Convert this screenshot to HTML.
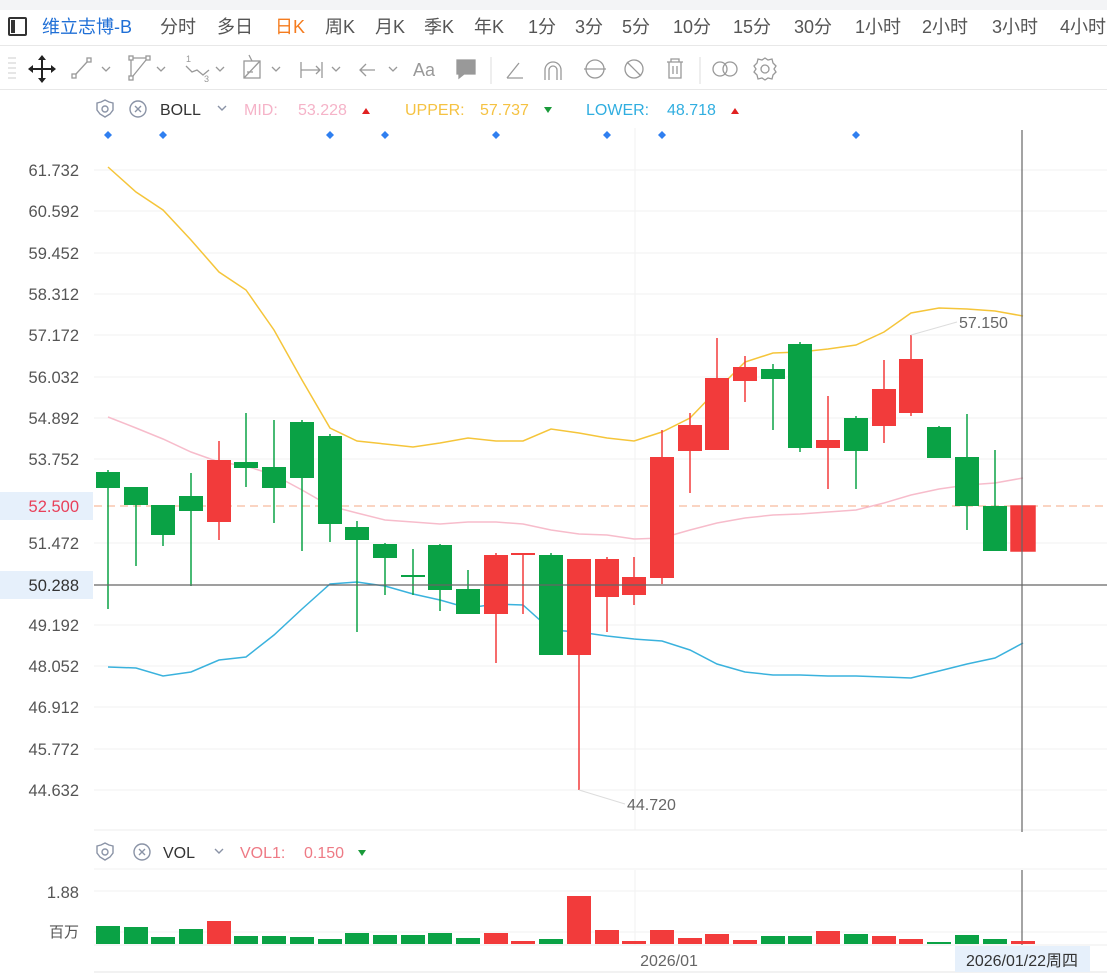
<!DOCTYPE html>
<html><head><meta charset="utf-8"><style>
*{margin:0;padding:0;box-sizing:border-box}
body{width:1107px;height:978px;background:#fff;font-family:"Liberation Sans","Noto Sans CJK SC",sans-serif;overflow:hidden;position:relative}
.top{position:absolute;left:0;top:0;width:1107px;height:10px;background:#f3f4f6}
.tabs{position:absolute;left:0;top:10px;width:1107px;height:36px;border-bottom:1px solid #e8e8e8;font-size:18px;color:#555;white-space:nowrap}
.tabs span{position:absolute;top:4px;line-height:26px}
.tools{position:absolute;left:0;top:47px;width:1107px;height:43px;border-bottom:1px solid #e8e8e8}
svg{position:absolute;left:0;top:0}
</style></head><body>
<div class="top"></div>
<div class="tabs">
<span style="left:8px;top:7px;width:19px;height:19px;border:2px solid #333;border-radius:2px"><i style="position:absolute;left:1px;top:1px;width:4px;height:13px;background:#333"></i></span>
<span style="left:42px;color:#1f6fd6">维立志博-B</span>
<span style="left:160px">分时</span><span style="left:217px">多日</span>
<span style="left:275px;color:#f57c1f">日K</span>
<span style="left:325px">周K</span><span style="left:375px">月K</span><span style="left:424px">季K</span><span style="left:474px">年K</span>
<span style="left:528px">1分</span><span style="left:575px">3分</span><span style="left:622px">5分</span>
<span style="left:673px">10分</span><span style="left:733px">15分</span><span style="left:794px">30分</span>
<span style="left:855px">1小时</span><span style="left:922px">2小时</span><span style="left:992px">3小时</span><span style="left:1060px">4小时</span>
</div>
<div class="tools"></div>
<svg width="1107" height="978" viewBox="0 0 1107 978" font-family="Liberation Sans, Noto Sans CJK SC, sans-serif">
<g stroke="#ddd" stroke-width="1.5"><line x1="8" y1="58" x2="16" y2="58"/><line x1="8" y1="63" x2="16" y2="63"/><line x1="8" y1="68" x2="16" y2="68"/><line x1="8" y1="73" x2="16" y2="73"/><line x1="8" y1="78" x2="16" y2="78"/></g>
<g stroke="#222" stroke-width="2" fill="none"><line x1="31" y1="69" x2="53" y2="69"/><line x1="42" y1="58" x2="42" y2="80"/></g>
<g fill="#222"><path d="M42 55l-4 5h8zM42 83l-4-5h8zM28 69l5-4v8zM56 69l-5-4v8z"/></g>
<g stroke="#999" stroke-width="1.3" fill="none">
<rect x="72" y="74" width="4" height="4"/><rect x="87" y="58" width="4" height="4"/><line x1="76" y1="74" x2="87" y2="62"/>
<path d="M102 67l4 4 4-4"/>
<rect x="129" y="56" width="4" height="4"/><rect x="146" y="56" width="4" height="4"/><rect x="129" y="76" width="4" height="4"/><path d="M131 60v16M133 58h13M146 60l-13 16"/>
<path d="M157 67l4 4 4-4"/>
<path d="M186 66l6 6 5-2 6 5 6-5"/><path d="M216 67l4 4 4-4"/>
<rect x="244" y="61" width="16" height="17"/><path d="M244 78l16-17M247 72h6M249 55l3 6"/><path d="M272 67l4 4 4-4"/>
<path d="M301 62v16M322 62v16M301 70h19M316 66l4 4-4 4"/><path d="M332 67l4 4 4-4"/>
<path d="M360 70h15M366 64l-6 6 6 6"/><path d="M389 67l4 4 4-4"/>
<path d="M457 60h18v14h-11l-5 4v-4h-2z" fill="#999" stroke="#999"/>
<line x1="491" y1="57" x2="491" y2="84" stroke="#e5e5e5"/>
<path d="M507 78h16M507 78l12-15"/>
<path d="M545 80v-10a8 8 0 0 1 16 0v10M549 80v-10a4 4 0 0 1 8 0v10"/>
<circle cx="595" cy="69" r="9"/><path d="M584 69h22"/>
<circle cx="634" cy="69" r="9"/><path d="M627 62l14 14"/>
<path d="M667 62h16M671 62v-3h8v3M669 62v16h12v-16M673 66v8M677 66v8"/>
<line x1="700" y1="57" x2="700" y2="84" stroke="#e5e5e5"/>
<circle cx="720" cy="69" r="7"/><circle cx="730" cy="69" r="7"/>
<circle cx="765" cy="69" r="4"/><path d="M765 58l3 2 4-1 1 4 3 3-2 3 2 3-3 3-1 4-4-1-3 2-3-2-4 1-1-4-3-3 2-3-2-3 3-3 1-4 4 1z"/>
</g>
<text x="186" y="62" font-size="9" fill="#999">1</text><text x="204" y="82" font-size="9" fill="#999">3</text>
<text x="413" y="76" font-size="18" fill="#999">Aa</text>
<g stroke="#8a93a6" stroke-width="1.4" fill="none"><circle cx="105" cy="109" r="3"/><path d="M105 100l4 2 4 1v7l-3 4-5 3-5-3-3-4v-7l4-1z"/><circle cx="138" cy="109" r="8"/><path d="M135 106l6 6M141 106l-6 6"/><path d="M218 106l4 4 4-4"/></g>
<text x="160" y="115" font-size="16" fill="#333">BOLL</text>
<text x="244" y="115" font-size="16" fill="#f5b3c8">MID:</text><text x="298" y="115" font-size="16" fill="#f5b3c8">53.228</text>
<path d="M362 114l4-6 4 6z" fill="#e02020"/>
<text x="405" y="115" font-size="16" fill="#f5c242">UPPER:</text><text x="480" y="115" font-size="16" fill="#f5c242">57.737</text>
<path d="M544 107l4 6 4-6z" fill="#1a9a3a"/>
<text x="586" y="115" font-size="16" fill="#30aee0">LOWER:</text><text x="667" y="115" font-size="16" fill="#30aee0">48.718</text>
<path d="M731 114l4-6 4 6z" fill="#e02020"/>
<g fill="#2f7ff0"><path d="M108 131l4 4-4 4-4-4z"/><path d="M163 131l4 4-4 4-4-4z"/><path d="M330 131l4 4-4 4-4-4z"/><path d="M385 131l4 4-4 4-4-4z"/><path d="M496 131l4 4-4 4-4-4z"/><path d="M607 131l4 4-4 4-4-4z"/><path d="M662 131l4 4-4 4-4-4z"/><path d="M856 131l4 4-4 4-4-4z"/></g>
<g stroke="#f2f2f2" stroke-width="1">
<line x1="94" y1="170" x2="1107" y2="170"/><line x1="94" y1="211" x2="1107" y2="211"/><line x1="94" y1="253" x2="1107" y2="253"/><line x1="94" y1="294" x2="1107" y2="294"/><line x1="94" y1="335" x2="1107" y2="335"/><line x1="94" y1="377" x2="1107" y2="377"/><line x1="94" y1="418" x2="1107" y2="418"/><line x1="94" y1="459" x2="1107" y2="459"/><line x1="94" y1="543" x2="1107" y2="543"/><line x1="94" y1="625" x2="1107" y2="625"/><line x1="94" y1="666" x2="1107" y2="666"/><line x1="94" y1="707" x2="1107" y2="707"/><line x1="94" y1="749" x2="1107" y2="749"/><line x1="94" y1="790" x2="1107" y2="790"/>
<line x1="635" y1="128" x2="635" y2="830"/><line x1="635" y1="870" x2="635" y2="945"/>
<line x1="94" y1="891" x2="1107" y2="891"/><line x1="94" y1="932" x2="1107" y2="932"/>
</g>
<line x1="94" y1="830" x2="1107" y2="830" stroke="#eee"/>
<line x1="94" y1="869" x2="1107" y2="869" stroke="#f2f2f2"/>
<line x1="94" y1="945" x2="1107" y2="945" stroke="#eee"/>
<line x1="94" y1="972" x2="1107" y2="972" stroke="#e5e5e5"/>
<g font-size="16.5" fill="#555" text-anchor="end">
<text x="79" y="176">61.732</text><text x="79" y="217">60.592</text><text x="79" y="259">59.452</text><text x="79" y="300">58.312</text><text x="79" y="341">57.172</text><text x="79" y="383">56.032</text><text x="79" y="424">54.892</text><text x="79" y="465">53.752</text><text x="79" y="549">51.472</text><text x="79" y="631">49.192</text><text x="79" y="672">48.052</text><text x="79" y="713">46.912</text><text x="79" y="755">45.772</text><text x="79" y="796">44.632</text>
</g>
<rect x="0" y="492" width="93" height="28" fill="#e6f0fb"/><text x="79" y="512" font-size="16.5" fill="#e8405a" text-anchor="end">52.500</text>
<rect x="0" y="571" width="93" height="28" fill="#e6f0fb"/><text x="79" y="591" font-size="16.5" fill="#333" text-anchor="end">50.288</text>
<line x1="94" y1="506" x2="1107" y2="506" stroke="#f5a884" stroke-dasharray="8 5"/>
<polyline fill="none" stroke="#f5c53a" stroke-width="1.5" points="108,167 136,192 163,210 191,240 219,272 246,290 274,330 302,380 330,428 357,441 385,444 413,447 440,443 468,438 496,441 523,441 551,429 579,433 607,438 634,441 662,432 690,418 717,390 745,362 773,353 800,352 828,349 856,345 884,332 911,313 939,308 967,309 995,311 1023,316"/>
<polyline fill="none" stroke="#f7bccb" stroke-width="1.5" points="108,417 136,428 163,439 191,452 219,462 246,466 274,475 302,490 330,506 357,513 385,520 413,522 440,524 468,522 496,522 523,524 551,530 579,534 607,535 634,539 662,538 690,530 717,523 745,518 773,515 800,514 828,512 856,510 884,503 911,495 939,489 967,485 995,483 1023,478"/>
<polyline fill="none" stroke="#3ab2dd" stroke-width="1.5" points="108,667 136,668 163,676 191,672 219,660 246,657 274,635 302,609 330,584 357,582 385,586 413,594 440,600 468,608 496,604 523,605 551,630 579,632 607,636 634,639 662,641 690,650 717,664 745,672 773,675 800,675 828,676 856,676 884,677 911,678 939,671 967,664 995,658 1023,643"/>
<g fill="#0aa245" stroke="#0aa245" stroke-width="1.5">
<line x1="108" y1="470" x2="108" y2="609"/><rect x="96" y="472" width="24" height="16" stroke="none"/>
<line x1="136" y1="487" x2="136" y2="566"/><rect x="124" y="487" width="24" height="18" stroke="none"/>
<line x1="163" y1="505" x2="163" y2="546"/><rect x="151" y="505" width="24" height="30" stroke="none"/>
<line x1="191" y1="473" x2="191" y2="586"/><rect x="179" y="496" width="24" height="15" stroke="none"/>
<line x1="246" y1="413" x2="246" y2="487"/><rect x="234" y="462" width="24" height="6" stroke="none"/>
<line x1="274" y1="420" x2="274" y2="523"/><rect x="262" y="467" width="24" height="21" stroke="none"/>
<line x1="302" y1="420" x2="302" y2="551"/><rect x="290" y="422" width="24" height="56" stroke="none"/>
<line x1="330" y1="434" x2="330" y2="542"/><rect x="318" y="436" width="24" height="88" stroke="none"/>
<line x1="357" y1="521" x2="357" y2="632"/><rect x="345" y="527" width="24" height="13" stroke="none"/>
<line x1="385" y1="543" x2="385" y2="595"/><rect x="373" y="544" width="24" height="14" stroke="none"/>
<line x1="413" y1="549" x2="413" y2="595"/><rect x="401" y="575" width="24" height="2" stroke="none"/>
<line x1="440" y1="544" x2="440" y2="611"/><rect x="428" y="545" width="24" height="45" stroke="none"/>
<line x1="468" y1="570" x2="468" y2="614"/><rect x="456" y="589" width="24" height="25" stroke="none"/>
<line x1="551" y1="553" x2="551" y2="655"/><rect x="539" y="555" width="24" height="100" stroke="none"/>
<line x1="773" y1="364" x2="773" y2="430"/><rect x="761" y="369" width="24" height="10" stroke="none"/>
<line x1="800" y1="342" x2="800" y2="452"/><rect x="788" y="344" width="24" height="104" stroke="none"/>
<line x1="856" y1="416" x2="856" y2="489"/><rect x="844" y="418" width="24" height="33" stroke="none"/>
<line x1="939" y1="426" x2="939" y2="458"/><rect x="927" y="427" width="24" height="31" stroke="none"/>
<line x1="967" y1="414" x2="967" y2="530"/><rect x="955" y="457" width="24" height="49" stroke="none"/>
<line x1="995" y1="450" x2="995" y2="551"/><rect x="983" y="506" width="24" height="45" stroke="none"/>
</g>
<g fill="#f23b3b" stroke="#f23b3b" stroke-width="1.5">
<line x1="219" y1="441" x2="219" y2="540"/><rect x="207" y="460" width="24" height="62" stroke="none"/>
<line x1="496" y1="553" x2="496" y2="663"/><rect x="484" y="555" width="24" height="59" stroke="none"/>
<line x1="523" y1="553" x2="523" y2="614"/><rect x="511" y="553" width="24" height="2" stroke="none"/>
<line x1="579" y1="559" x2="579" y2="790"/><rect x="567" y="559" width="24" height="96" stroke="none"/>
<line x1="607" y1="557" x2="607" y2="632"/><rect x="595" y="559" width="24" height="38" stroke="none"/>
<line x1="634" y1="557" x2="634" y2="605"/><rect x="622" y="577" width="24" height="18" stroke="none"/>
<line x1="662" y1="430" x2="662" y2="584"/><rect x="650" y="457" width="24" height="121" stroke="none"/>
<line x1="690" y1="413" x2="690" y2="493"/><rect x="678" y="425" width="24" height="26" stroke="none"/>
<line x1="717" y1="338" x2="717" y2="450"/><rect x="705" y="378" width="24" height="72" stroke="none"/>
<line x1="745" y1="356" x2="745" y2="402"/><rect x="733" y="367" width="24" height="14" stroke="none"/>
<line x1="828" y1="396" x2="828" y2="489"/><rect x="816" y="440" width="24" height="8" stroke="none"/>
<line x1="884" y1="360" x2="884" y2="443"/><rect x="872" y="389" width="24" height="37" stroke="none"/>
<line x1="911" y1="335" x2="911" y2="416"/><rect x="899" y="359" width="24" height="54" stroke="none"/>
<rect x="1011" y="506" width="24" height="45"/>
</g>
<line x1="579" y1="790" x2="625" y2="804" stroke="#ddd"/>
<text x="627" y="810" font-size="16" fill="#666">44.720</text>
<line x1="911" y1="335" x2="957" y2="322" stroke="#ddd"/>
<text x="959" y="328" font-size="16" fill="#666">57.150</text>
<line x1="94" y1="585" x2="1107" y2="585" stroke="#666" stroke-width="1.2"/>
<line x1="1022" y1="130" x2="1022" y2="832" stroke="#666" stroke-width="1.2"/>
<line x1="1022" y1="870" x2="1022" y2="945" stroke="#666" stroke-width="1.2"/>
<g stroke="#8a93a6" stroke-width="1.4" fill="none"><circle cx="105" cy="852" r="3"/><path d="M105 843l4 2 4 1v7l-3 4-5 3-5-3-3-4v-7l4-1z"/><circle cx="142" cy="852" r="8"/><path d="M139 849l6 6M145 849l-6 6"/><path d="M215 849l4 4 4-4"/></g>
<text x="163" y="858" font-size="16" fill="#333">VOL</text>
<text x="240" y="858" font-size="16" fill="#ee7a85">VOL1:</text><text x="304" y="858" font-size="16" fill="#ee7a85">0.150</text>
<path d="M358 850l4 6 4-6z" fill="#1a9a3a"/>
<text x="79" y="898" font-size="16.5" fill="#555" text-anchor="end">1.88</text>
<text x="79" y="937" font-size="15" fill="#555" text-anchor="end">百万</text>
<g fill="#0aa245">
<rect x="96" y="926" width="24" height="18"/><rect x="124" y="927" width="24" height="17"/><rect x="151" y="937" width="24" height="7"/><rect x="179" y="929" width="24" height="15"/>
<rect x="234" y="936" width="24" height="8"/><rect x="262" y="936" width="24" height="8"/><rect x="290" y="937" width="24" height="7"/><rect x="318" y="939" width="24" height="5"/><rect x="345" y="933" width="24" height="11"/><rect x="373" y="935" width="24" height="9"/><rect x="401" y="935" width="24" height="9"/><rect x="428" y="933" width="24" height="11"/><rect x="456" y="938" width="24" height="6"/>
<rect x="539" y="939" width="24" height="5"/><rect x="761" y="936" width="24" height="8"/><rect x="788" y="936" width="24" height="8"/><rect x="844" y="934" width="24" height="10"/><rect x="927" y="942" width="24" height="2"/><rect x="955" y="935" width="24" height="9"/><rect x="983" y="939" width="24" height="5"/>
</g>
<g fill="#f23b3b">
<rect x="207" y="921" width="24" height="23"/><rect x="484" y="933" width="24" height="11"/><rect x="511" y="941" width="24" height="3"/><rect x="567" y="896" width="24" height="48"/><rect x="595" y="930" width="24" height="14"/><rect x="622" y="941" width="24" height="3"/><rect x="650" y="930" width="24" height="14"/><rect x="678" y="938" width="24" height="6"/><rect x="705" y="934" width="24" height="10"/><rect x="733" y="940" width="24" height="4"/><rect x="816" y="931" width="24" height="13"/><rect x="872" y="936" width="24" height="8"/><rect x="899" y="939" width="24" height="5"/><rect x="1011" y="941" width="24" height="3"/>
</g>
<text x="669" y="966" font-size="16" fill="#666" text-anchor="middle">2026/01</text>
<rect x="955" y="946" width="135" height="26" fill="#e6f0fb"/>
<text x="1022" y="966" font-size="16" fill="#333" text-anchor="middle">2026/01/22周四</text>
</svg>
</body></html>
